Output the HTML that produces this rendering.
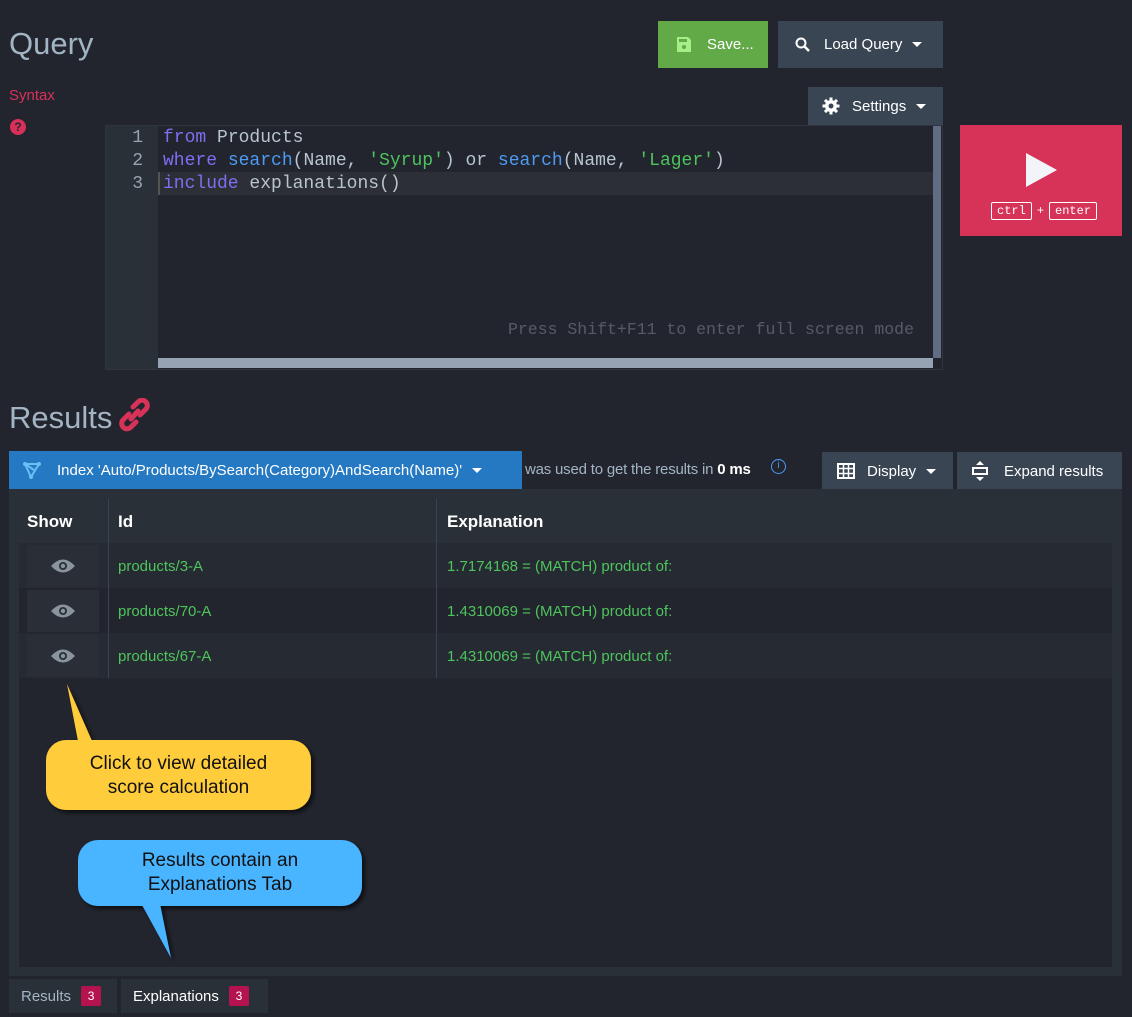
<!DOCTYPE html>
<html><head><meta charset="utf-8"><style>
*{box-sizing:border-box;margin:0;padding:0}
body{width:1132px;height:1017px;background:#22252e;font-family:"Liberation Sans",sans-serif;position:relative;overflow:hidden;color:#fff}
.a{position:absolute}
.mono{font-family:"Liberation Mono",monospace}
.btn{position:absolute;display:flex;align-items:center;font-size:15px;color:#fff}
.caret{display:inline-block;width:0;height:0;border-left:5px solid transparent;border-right:5px solid transparent;border-top:5px solid #fff;margin-left:10px}
.row{position:absolute;left:19px;width:1093px;height:45px}
.cell{position:absolute;font-size:15px;color:#4ec45c;top:15px}
.eye{position:absolute;left:8px;top:2px;width:72px;height:42px;background:#2a2f37;display:flex;align-items:center;justify-content:center}
.vl{position:absolute;width:1px;background:#3a4350}
.badge{display:inline-block;background:#b5134f;color:#fff;font-size:12px;width:20px;height:20px;line-height:20px;text-align:center;border-radius:2px;margin-left:10px}
</style></head><body>
<div class="a" style="left:9px;top:26px;font-size:31px;color:#a3b4c4">Query</div>
<div class="a" style="left:9px;top:87px;font-size:15px;color:#d9305a">Syntax</div>
<div class="a" style="left:10px;top:119px;width:16px;height:16px;border-radius:50%;background:#d9305a;color:#22252e;font-size:12px;font-weight:bold;text-align:center;line-height:16px">?</div>

<div class="btn" style="left:658px;top:21px;width:110px;height:47px;background:#62aa48;padding-left:19px">
<svg width="14" height="15" viewBox="0 0 14 15"><path d="M0 0H11L14 3V15H0Z" fill="#a6ee86"/><rect x="2" y="2" width="8" height="3" fill="#62aa48"/><circle cx="7" cy="10" r="2" fill="#62aa48"/></svg>
<span style="margin-left:16px">Save...</span></div>
<div class="btn" style="left:778px;top:21px;width:165px;height:47px;background:#3a4553;padding-left:17px">
<svg width="16" height="16" viewBox="0 0 16 16"><circle cx="6" cy="6" r="4.5" stroke="#fff" stroke-width="2" fill="none"/><path d="M9.5 9.5L14 14" stroke="#fff" stroke-width="2.5"/></svg>
<span style="margin-left:13px">Load Query</span><span class="caret"></span></div>
<div class="btn" style="left:808px;top:87px;width:135px;height:38px;background:#3a4553;padding-left:14px">
<svg width="18" height="18" viewBox="0 0 18 18"><g fill="#fff"><circle cx="9" cy="9" r="6"/><rect x="7.5" y="0.5" width="3" height="17"/><rect x="0.5" y="7.5" width="17" height="3"/><rect x="7.5" y="0.5" width="3" height="17" transform="rotate(45 9 9)"/><rect x="7.5" y="0.5" width="3" height="17" transform="rotate(-45 9 9)"/></g><circle cx="9" cy="9" r="2.5" fill="#3a4553"/></svg>
<span style="margin-left:12px">Settings</span><span class="caret"></span></div>

<div class="a" style="left:105px;top:125px;width:838px;height:245px;background:#22252e;border:1px solid #30343c"></div>
<div class="a" style="left:106px;top:126px;width:52px;height:243px;background:#2a3038"></div>
<div class="a" style="left:158px;top:172px;width:775px;height:23px;background:#2c2f35"></div>
<div class="a mono" style="left:106px;top:127px;width:37px;text-align:right;font-size:18px;line-height:23px;color:#9aa4ae">1<br>2<br>3</div>
<div class="a mono" style="left:163px;top:127px;font-size:18px;line-height:23px;color:#b8c4cf;white-space:pre"><span style="color:#7d6ff0">from</span> Products
<span style="color:#7d6ff0">where</span> <span style="color:#4d9bf2">search</span>(Name, <span style="color:#4ec45c">'Syrup'</span>) or <span style="color:#4d9bf2">search</span>(Name, <span style="color:#4ec45c">'Lager'</span>)
<span style="color:#7d6ff0">include</span> explanations()</div>
<div class="a" style="left:158px;top:172px;width:2px;height:23px;background:#555"></div>
<div class="a mono" style="left:508px;top:320px;font-size:16.5px;color:#555c66">Press Shift+F11 to enter full screen mode</div>
<div class="a" style="left:933px;top:126px;width:8px;height:232px;background:#5f6c83"></div>
<div class="a" style="left:158px;top:358px;width:775px;height:10px;background:#95a3b3"></div>

<div class="a" style="left:960px;top:125px;width:162px;height:111px;background:#d73258"></div>
<svg class="a" style="left:1026px;top:153px" width="32" height="34" viewBox="0 0 32 34"><path d="M0 0L31 17L0 34Z" fill="#f2f4f7"/></svg>
<div class="a mono" style="left:991px;top:202px;font-size:12px;color:#fff;display:flex;align-items:center">
<span style="border:1px solid #fff;border-radius:2px;padding:1px 5px">ctrl</span><span style="margin:0 5px">+</span><span style="border:1px solid #fff;border-radius:2px;padding:1px 5px">enter</span></div>

<div class="a" style="left:9px;top:400px;font-size:31px;color:#a3b4c4">Results</div>
<svg class="a" style="left:119px;top:398px" width="32" height="34" viewBox="0 0 32 34"><g fill="none" stroke="#d73258" stroke-width="5" stroke-linecap="round"><path d="M14 9L19 4A5 5 0 0 1 27 11L21 17"/><path d="M17 24L12 29A5 5 0 0 1 4 22L10 16"/><path d="M12 21L19 13"/></g></svg>

<div class="btn" style="left:9px;top:451px;width:513px;height:38px;background:#2479c2;padding-left:14px">
<svg width="18" height="18" viewBox="0 0 18 18"><g stroke="#66c1f5" stroke-width="2" fill="none"><path d="M2 3H16L8 16Z"/><path d="M2 3L11 9"/></g><circle cx="2" cy="3" r="2" fill="#66c1f5"/><circle cx="16" cy="3" r="2" fill="#66c1f5"/><circle cx="8" cy="16" r="2" fill="#66c1f5"/></svg>
<span style="margin-left:16px">Index 'Auto/Products/BySearch(Category)AndSearch(Name)'</span><span class="caret"></span></div>
<div class="a" style="left:525px;top:461px;font-size:15px;letter-spacing:-0.2px;color:#a3b4c4">was used to get the results in <b style="color:#fff">0 ms</b></div>
<div class="a" style="left:771px;top:459px;width:15px;height:15px;border:1.5px solid #4d9bf2;border-radius:50%;color:#4d9bf2;font-size:10px;text-align:center;line-height:12px">i</div>
<div class="btn" style="left:822px;top:452px;width:131px;height:38px;background:#3a4553;padding-left:15px">
<svg width="18" height="16" viewBox="0 0 18 16"><rect x="1" y="1" width="16" height="14" fill="none" stroke="#fff" stroke-width="2"/><path d="M1 5.5H17M1 10.5H17M6.5 1V15M11.5 1V15" stroke="#fff" stroke-width="1.5"/></svg>
<span style="margin-left:12px">Display</span><span class="caret"></span></div>
<div class="btn" style="left:957px;top:452px;width:165px;height:38px;background:#3a4553;padding-left:14px">
<svg width="18" height="20" viewBox="0 0 18 20"><path d="M9 0L13 4H5Z M9 20L13 16H5Z" fill="#fff"/><rect x="2" y="7" width="14" height="6" fill="none" stroke="#fff" stroke-width="2"/></svg>
<span style="margin-left:15px">Expand results</span></div>

<div class="a" style="left:9px;top:489px;width:1113px;height:487px;background:#2a3038"></div>
<div class="a" style="left:19px;top:543px;width:1093px;height:424px;background:#22252e"></div>
<div class="a" style="left:27px;top:512px;font-size:17px;font-weight:bold">Show</div>
<div class="a" style="left:118px;top:512px;font-size:17px;font-weight:bold">Id</div>
<div class="a" style="left:447px;top:512px;font-size:17px;font-weight:bold">Explanation</div>

<div class="row" style="top:543px;background:#262a33"><div class="eye"><svg width="24" height="14" viewBox="0 0 24 14"><path d="M0 7Q12 -6 24 7Q12 20 0 7Z" fill="#8a949f"/><circle cx="12" cy="7" r="4" fill="#2a2f37"/><circle cx="12" cy="7" r="2.2" fill="#8a949f"/></svg></div><div class="cell" style="left:99px">products/3-A</div><div class="cell" style="left:428px">1.7174168 = (MATCH) product of:</div></div>
<div class="row" style="top:588px;background:#22252e"><div class="eye"><svg width="24" height="14" viewBox="0 0 24 14"><path d="M0 7Q12 -6 24 7Q12 20 0 7Z" fill="#8a949f"/><circle cx="12" cy="7" r="4" fill="#2a2f37"/><circle cx="12" cy="7" r="2.2" fill="#8a949f"/></svg></div><div class="cell" style="left:99px">products/70-A</div><div class="cell" style="left:428px">1.4310069 = (MATCH) product of:</div></div>
<div class="row" style="top:633px;background:#262a33"><div class="eye"><svg width="24" height="14" viewBox="0 0 24 14"><path d="M0 7Q12 -6 24 7Q12 20 0 7Z" fill="#8a949f"/><circle cx="12" cy="7" r="4" fill="#2a2f37"/><circle cx="12" cy="7" r="2.2" fill="#8a949f"/></svg></div><div class="cell" style="left:99px">products/67-A</div><div class="cell" style="left:428px">1.4310069 = (MATCH) product of:</div></div>
<div class="vl" style="left:108px;top:499px;height:179px"></div>
<div class="vl" style="left:436px;top:499px;height:179px"></div>

<svg class="a" style="left:40px;top:680px;overflow:visible" width="330" height="290">
<defs><filter id="s"><feDropShadow dx="3" dy="3" stdDeviation="2" flood-color="#000" flood-opacity="0.6"/></filter></defs>
<g filter="url(#s)">
<path d="M27 4L52 61H38Z" fill="#ffcc3a"/>
<rect x="6" y="60" width="265" height="70" rx="20" fill="#ffcc3a"/>
<path d="M102 225L131 278L120 224Z" fill="#4ab4ff"/>
<rect x="38" y="160" width="284" height="66" rx="20" fill="#4ab4ff"/>
</g></svg>
<div class="a" style="left:46px;top:752px;width:265px;text-align:center;font-size:19px;line-height:24px;color:#111">Click to view detailed<br>score calculation</div>
<div class="a" style="left:78px;top:849px;width:284px;text-align:center;font-size:19px;line-height:24px;color:#111">Results contain an<br>Explanations Tab</div>

<div class="a" style="left:9px;top:979px;width:108px;height:34px;background:#2a3038;font-size:15px;color:#a3b4c4;display:flex;align-items:center;padding-left:12px">Results<span class="badge">3</span></div>
<div class="a" style="left:121px;top:979px;width:147px;height:34px;background:#2a3038;font-size:15px;color:#fff;display:flex;align-items:center;padding-left:12px">Explanations<span class="badge">3</span></div>
</body></html>
